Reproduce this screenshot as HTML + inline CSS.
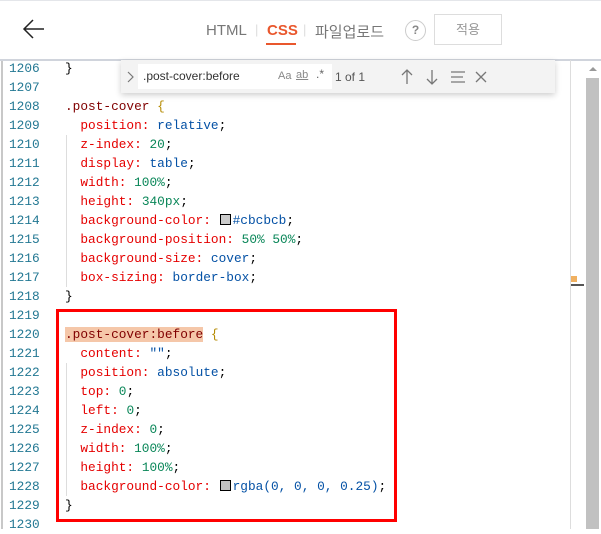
<!DOCTYPE html><html><head><meta charset="utf-8"><style>
body{margin:0;width:601px;height:529px;overflow:hidden;background:#fff;font-family:"Liberation Sans","Noto Sans CJK KR",sans-serif;position:relative}
.hdr{position:absolute;left:0;top:0;width:601px;height:58px;border-top:1px solid #e4e6ea;border-bottom:2px solid #d0d4dc;background:#fff}
.code{position:absolute;left:0;top:59px;font-family:"Liberation Mono",monospace;font-size:12.8px}
.row{height:19px;line-height:19px;white-space:pre;position:relative}
.ln{position:absolute;left:9px;color:#237893;width:40px}
.tx{position:absolute;left:65px;color:#000}
.s{color:#800000}.p{color:#e50000}.v{color:#0451a5}.n{color:#098658}.b{color:#b58a00}
.sw{display:inline-block;width:9px;height:9px;border:1px solid #000;margin:0 2px 0 1px;vertical-align:-1px}
</style></head><body>
<div style="position:absolute;left:1px;top:60px;width:2px;height:469px;background:#c8c8c8"></div>
<div class="hdr">
<svg style="position:absolute;left:22px;top:17px" width="24" height="22"><path d="M22 11H2M11 2L2 11L11 20" fill="none" stroke="#222" stroke-width="1.5"/></svg>
<span style="position:absolute;left:206px;top:21px;font-size:15px;color:#777">HTML</span>
<span style="position:absolute;left:255px;top:21px;font-size:13px;color:#ddd">|</span>
<span style="position:absolute;left:267px;top:21px;font-size:15px;color:#e9572d;font-weight:bold">CSS</span>
<div style="position:absolute;left:266px;top:42px;width:30px;height:2px;background:#e9572d"></div>
<span style="position:absolute;left:303px;top:21px;font-size:13px;color:#ddd">|</span>
<span style="position:absolute;left:315px;top:20px;font-size:15px;color:#777">파일업로드</span>
<div style="position:absolute;left:405px;top:19px;width:19px;height:19px;border:1px solid #ccc;border-radius:50%;text-align:center;line-height:19px;font-size:12px;color:#888;font-weight:bold">?</div>
<div style="position:absolute;left:434px;top:13px;width:66px;height:29px;border:1px solid #ddd;text-align:center;line-height:29px;font-size:13px;color:#999">적용</div>
</div>
<div class="code">
<div class="row"><span class="ln">1206</span><span class="tx">}</span></div>
<div class="row"><span class="ln">1207</span></div>
<div class="row"><span class="ln">1208</span><span class="tx"><span class="s">.post-cover</span> <span class="b">{</span></span></div>
<div class="row"><span class="ln">1209</span><span class="tx">  <span class="p">position:</span> <span class="v">relative</span>;</span></div>
<div class="row"><span class="ln">1210</span><span class="tx">  <span class="p">z-index:</span> <span class="n">20</span>;</span></div>
<div class="row"><span class="ln">1211</span><span class="tx">  <span class="p">display:</span> <span class="v">table</span>;</span></div>
<div class="row"><span class="ln">1212</span><span class="tx">  <span class="p">width:</span> <span class="n">100%</span>;</span></div>
<div class="row"><span class="ln">1213</span><span class="tx">  <span class="p">height:</span> <span class="n">340px</span>;</span></div>
<div class="row"><span class="ln">1214</span><span class="tx">  <span class="p">background-color:</span> <span class="sw" style="background:#cbcbcb"></span><span class="v">#cbcbcb</span>;</span></div>
<div class="row"><span class="ln">1215</span><span class="tx">  <span class="p">background-position:</span> <span class="n">50% 50%</span>;</span></div>
<div class="row"><span class="ln">1216</span><span class="tx">  <span class="p">background-size:</span> <span class="v">cover</span>;</span></div>
<div class="row"><span class="ln">1217</span><span class="tx">  <span class="p">box-sizing:</span> <span class="v">border-box</span>;</span></div>
<div class="row"><span class="ln">1218</span><span class="tx">}</span></div>
<div class="row"><span class="ln">1219</span></div>
<div class="row"><span class="ln">1220</span><span class="tx"><span class="s" style="background:#f5c7a9">.post-cover:before</span> <span class="b">{</span></span></div>
<div class="row"><span class="ln">1221</span><span class="tx">  <span class="p">content:</span> <span class="v">""</span>;</span></div>
<div class="row"><span class="ln">1222</span><span class="tx">  <span class="p">position:</span> <span class="v">absolute</span>;</span></div>
<div class="row"><span class="ln">1223</span><span class="tx">  <span class="p">top:</span> <span class="n">0</span>;</span></div>
<div class="row"><span class="ln">1224</span><span class="tx">  <span class="p">left:</span> <span class="n">0</span>;</span></div>
<div class="row"><span class="ln">1225</span><span class="tx">  <span class="p">z-index:</span> <span class="n">0</span>;</span></div>
<div class="row"><span class="ln">1226</span><span class="tx">  <span class="p">width:</span> <span class="n">100%</span>;</span></div>
<div class="row"><span class="ln">1227</span><span class="tx">  <span class="p">height:</span> <span class="n">100%</span>;</span></div>
<div class="row"><span class="ln">1228</span><span class="tx">  <span class="p">background-color:</span> <span class="sw" style="background:#bfbfbf"></span><span class="v">rgba(0, 0, 0, 0.25)</span>;</span></div>
<div class="row"><span class="ln">1229</span><span class="tx">}</span></div>
<div class="row"><span class="ln">1230</span></div>
</div>
<div style="position:absolute;left:66px;top:135px;width:1px;height:152px;background:#ddd"></div>
<div style="position:absolute;left:66px;top:363px;width:1px;height:133px;background:#ddd"></div>
<div style="position:absolute;left:56px;top:309px;width:335px;height:207px;border:3px solid #f00"></div>
<div style="position:absolute;left:570px;top:60px;width:1px;height:469px;background:#ddd"></div>
<div style="position:absolute;left:586px;top:78px;width:13px;height:451px;background:#c1c1c1"></div>
<div style="position:absolute;left:589px;top:67px;width:0;height:0;border-left:4px solid transparent;border-right:4px solid transparent;border-bottom:4px solid #999"></div>
<div style="position:absolute;left:571px;top:276px;width:6px;height:6px;background:#f0b060"></div>
<div style="position:absolute;left:571px;top:284px;width:13px;height:2px;background:#555"></div>
<div style="position:absolute;left:121px;top:60px;width:434px;height:33px;background:#f3f3f3;box-shadow:0 2px 6px rgba(0,0,0,.2)">
<svg style="position:absolute;left:5px;top:11px" width="8" height="12"><path d="M2 1L7 6L2 11" fill="none" stroke="#777" stroke-width="1.2"/></svg>
<div style="position:absolute;left:17px;top:4px;width:194px;height:25px;background:#fff"></div>
<span style="position:absolute;left:22px;top:9px;font-size:12px;color:#333">.post-cover:before</span>
<span style="position:absolute;left:157px;top:10px;font-size:11px;color:#888">Aa</span>
<span style="position:absolute;left:175px;top:9px;font-size:11px;color:#888;text-decoration:underline">ab</span>
<span style="position:absolute;left:195px;top:7px;font-size:12px;color:#666">.*</span>
<span style="position:absolute;left:214px;top:10px;font-size:12px;color:#555">1 of 1</span>
<svg style="position:absolute;left:280px;top:8px" width="100" height="18" fill="none" stroke="#777" stroke-width="1.3">
<path d="M6 16V2M1 7L6 2L11 7"/><path d="M31 2V16M26 11L31 16L36 11"/><path d="M50 4H64M50 9H62M50 14H64"/><path d="M75 4L85 14M85 4L75 14"/></svg>
</div>
</body></html>
